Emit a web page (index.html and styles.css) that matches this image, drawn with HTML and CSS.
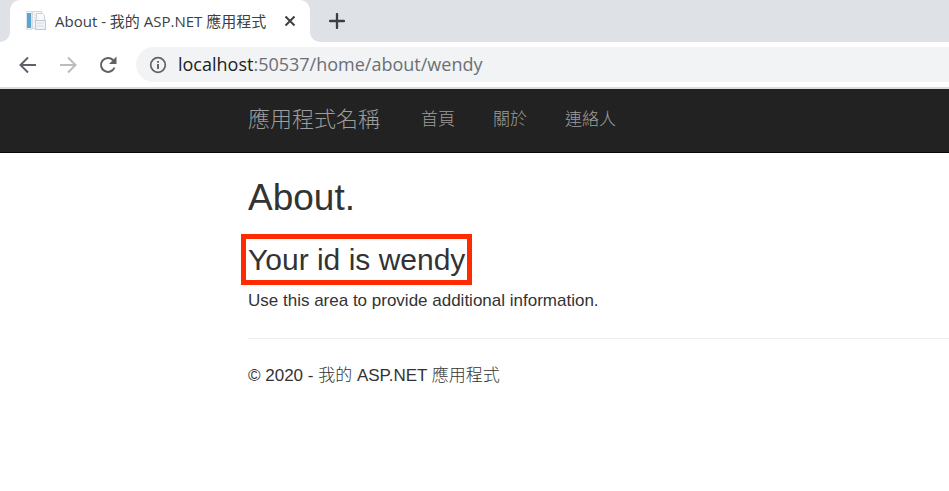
FILE: index.html
```html
<!DOCTYPE html>
<html lang="zh-Hant">
<head>
    <meta charset="utf-8">
    <meta name="viewport" content="width=device-width, initial-scale=1.0">
    <title>About - 我的 ASP.NET 應用程式</title>
    <link rel="stylesheet" href="styles.css">
</head>
<body>
    <div class="browser">
        <div class="tab-strip">
            <div class="tab-edge left"></div>
            <div class="tab">
                <svg class="favicon" width="20" height="20" viewBox="0 0 20 20" aria-hidden="true">
                    <rect x="6.500" y="0.500" width="9" height="17" fill="#f4f6f8" stroke="#d5d9e0"/>
                    <path d="M8 4h5M8 7h5M8 10h4" stroke="#d5dbe3"/>
                    <path d="M10.500 2.500h6l2 2v12h-8z" fill="#f8f9fb" stroke="#cdd2da"/>
                    <rect x="9.500" y="9.500" width="10" height="9" fill="#f1f3f8" stroke="#c3c9d3"/>
                    <path d="M11 12h7M11 15h7" stroke="#d9dde6"/>
                    <rect x="0.500" y="0.500" width="5" height="18" fill="#f0f4f7" stroke="#dde2e7"/>
                    <rect x="1" y="2" width="4" height="15" fill="#5aa5d3"/>
                </svg>
                <span class="tab-title">About - 我的 ASP.NET 應用程式</span>
                <button class="icon-btn" type="button" aria-label="關閉分頁">
                    <svg width="12" height="12" viewBox="0 0 12 12"><path d="M1.500 1.500l9 9M10.500 1.500l-9 9" stroke="#3c4043" stroke-width="2"/></svg>
                </button>
            </div>
            <div class="tab-edge right"></div>
            <button class="icon-btn new-tab" type="button" aria-label="新增分頁">
                <svg width="16" height="16" viewBox="0 0 16 16"><path d="M8 1v14M1 8h14" stroke="#3c4043" stroke-width="2.300" stroke-linecap="round"/></svg>
            </button>
        </div>
        <div class="toolbar">
            <button class="icon-btn" type="button" aria-label="上一頁">
                <svg width="20" height="20" viewBox="0 0 20 20"><path d="M18 10H3M10 2.500L2.500 10l7.500 7.500" fill="none" stroke="#5f6368" stroke-width="2"/></svg>
            </button>
            <button class="icon-btn" type="button" aria-label="下一頁" disabled>
                <svg width="20" height="20" viewBox="0 0 20 20"><path d="M2 10h15M10 2.500l7.500 7.500-7.500 7.500" fill="none" stroke="#babcbe" stroke-width="2"/></svg>
            </button>
            <button class="icon-btn" type="button" aria-label="重新載入">
                <svg width="20" height="20" viewBox="0 0 20 20"><path d="M16.500 12.500A7 7 0 1 1 15 5l1 1" fill="none" stroke="#5f6368" stroke-width="2"/><path d="M18.500 1.500v7.500h-7.500z" fill="#5f6368"/></svg>
            </button>
            <div class="address-bar">
                <svg width="18" height="18" viewBox="0 0 18 18" aria-hidden="true"><circle cx="9" cy="9" r="7.300" fill="none" stroke="#5f6368" stroke-width="1.700"/><path d="M9 8v5M9 5v1.800" stroke="#5f6368" stroke-width="1.900"/></svg>
                <span class="url"><span class="host">localhost</span>:50537/home/about/wendy</span>
            </div>
        </div>
    </div>

    <nav class="navbar">
        <div class="container">
            <a class="navbar-brand" href="#">應用程式名稱</a>
            <ul class="navbar-nav">
                <li><a href="#">首頁</a></li>
                <li><a href="#">關於</a></li>
                <li><a href="#">連絡人</a></li>
            </ul>
        </div>
    </nav>

    <main class="container body-content">
        <h2>About.</h2>
        <h3><span class="highlight">Your id is wendy</span></h3>
        <p>Use this area to provide additional information.</p>
        <hr>
        <footer>
            <p>© 2020 - 我的 ASP.NET 應用程式</p>
        </footer>
    </main>
</body>
</html>
```
FILE: styles.css
```css
* {
    box-sizing: border-box;
}
body {
    margin: 0;
    font-family: "Liberation Sans", "Noto Sans CJK TC", sans-serif;
    font-size: 17px;
    line-height: 25px;
    color: #333;
    background-color: #fff;
    overflow-x: hidden;
}

/* Browser bar */
.browser {
    font-family: "Open Sans", "Noto Sans CJK TC", sans-serif;
    border-bottom: 2px solid #dadce0;
}
.tab-strip {
    display: flex;
    height: 42px;
    background-color: #dee1e6;
}
.tab {
    display: flex;
    align-items: center;
    width: 300px;
    padding: 0 12px 0 16px;
    background-color: #fff;
    border-radius: 10px 10px 0 0;
}
.tab-edge {
    width: 10px;
    background-color: #fff;
}
.tab-edge::before {
    content: "";
    display: block;
    height: 100%;
    background-color: #dee1e6;
}
.tab-edge.left::before {
    border-bottom-right-radius: 10px;
}
.tab-edge.right::before {
    border-bottom-left-radius: 10px;
}
.tab-title {
    flex: 1;
    margin-left: 9px;
    font-size: 15px;
    white-space: nowrap;
    color: #3c4043;
}
.icon-btn {
    display: flex;
    align-items: center;
    justify-content: center;
    padding: 2px;
    border: 0;
    background: none;
}
.new-tab {
    margin-left: 7px;
}
.toolbar {
    display: flex;
    align-items: center;
    gap: 16px;
    height: 45px;
    padding-left: 16px;
}
.address-bar {
    display: flex;
    flex: 1;
    align-items: center;
    gap: 11px;
    height: 35px;
    padding-left: 13px;
    border-radius: 18px 0 0 18px;
    background-color: #f1f3f4;
}
.url {
    font-size: 18px;
    color: #6b6f74;
}
.host {
    color: #202124;
}

/* Page */
.navbar {
    background-color: #222;
    border-bottom: 1px solid #080808;
}
.container {
    padding-left: 248px;
}
.navbar .container {
    display: flex;
    align-items: center;
    height: 63px;
    padding-bottom: 2px;
}
.navbar a {
    color: #9d9d9d;
    font-weight: 300;
    text-decoration: none;
}
.navbar-brand {
    font-size: 22px;
}
.navbar-nav {
    display: flex;
    gap: 38px;
    margin: 0 0 0 41px;
    padding: 0;
    list-style: none;
}
h2, h3 {
    margin: 25px 0 12px;
    font-weight: 500;
    line-height: 1.1;
}
h2 {
    font-size: 37px;
}
h3 {
    margin-top: 24px;
    font-size: 30px;
}
.highlight {
    margin: 0 -2px;
    padding: 4px 2px;
    outline: 5px solid #ff2a00;
}
p {
    margin: 0 0 12px;
}
hr {
    margin: 25px 0 24px;
    border: 0;
    border-top: 1px solid #eee;
}
footer {
    font-weight: 300;
}
```
